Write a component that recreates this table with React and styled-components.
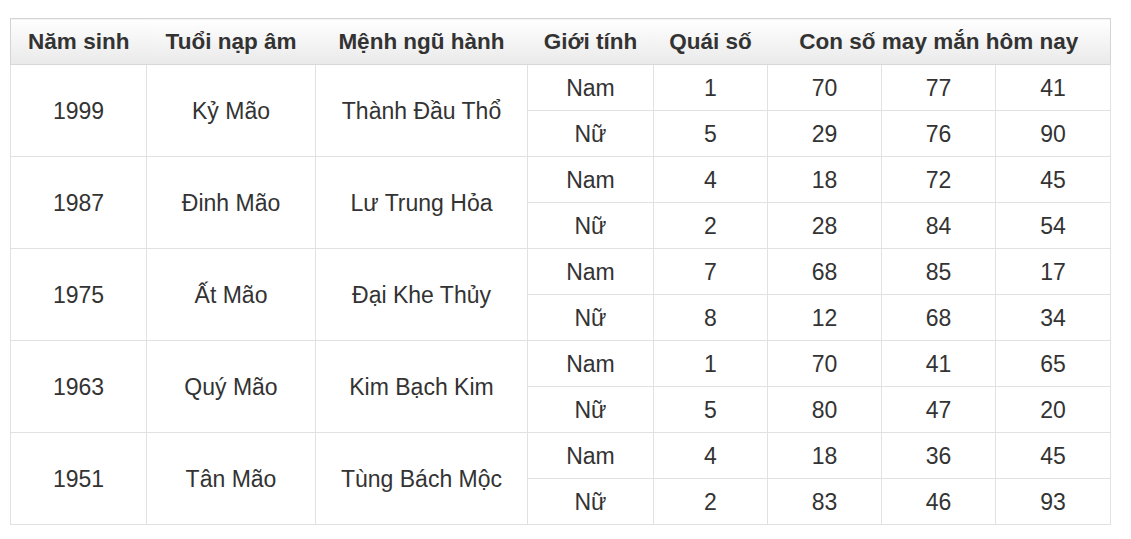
import React from "react";
import styled, { createGlobalStyle } from "styled-components";

const Global = createGlobalStyle`
  html, body { margin: 0; padding: 0; background: #fff; }
  body { font-family: "Liberation Sans", Arial, sans-serif; color: #333; }
`;

const Wrap = styled.div`
  padding: 18px 0 0 10px;
`;

const Table = styled.table`
  border-collapse: collapse;
  table-layout: fixed;
  width: 1100px;
  font-size: 23px;
  color: #333;
`;

const Th = styled.th`
  height: 45px;
  padding: 0;
  font-size: 22.5px;
  font-weight: bold;
  text-align: center;
  vertical-align: middle;
  white-space: nowrap;
  background: linear-gradient(to bottom, #ffffff 0%, #e9e9e9 100%);
  border-top: 1px solid #d4d4d4;
  border-bottom: 1px solid #d8d8d8;
  border-left: ${(p) => (p.$first ? "1px solid #d4d4d4" : "none")};
  border-right: ${(p) => (p.$last ? "1px solid #d4d4d4" : "none")};
`;

const Td = styled.td`
  height: 44px;
  padding: 1px 0 0;
  text-align: center;
  vertical-align: middle;
  white-space: nowrap;
  border: 1px solid #e1e1e1;
`;

const data = [
  ["1999", "Kỷ Mão", "Thành Đầu Thổ", [["Nam", 1, 70, 77, 41], ["Nữ", 5, 29, 76, 90]]],
  ["1987", "Đinh Mão", "Lư Trung Hỏa", [["Nam", 4, 18, 72, 45], ["Nữ", 2, 28, 84, 54]]],
  ["1975", "Ất Mão", "Đại Khe Thủy", [["Nam", 7, 68, 85, 17], ["Nữ", 8, 12, 68, 34]]],
  ["1963", "Quý Mão", "Kim Bạch Kim", [["Nam", 1, 70, 41, 65], ["Nữ", 5, 80, 47, 20]]],
  ["1951", "Tân Mão", "Tùng Bách Mộc", [["Nam", 4, 18, 36, 45], ["Nữ", 2, 83, 46, 93]]],
];

const widths = [136, 169, 212, 126, 114, 114, 114, 115];

export default function App() {
  return (
    <>
      <Global />
      <Wrap>
        <Table>
          <colgroup>
            {widths.map((w, i) => (
              <col key={i} style={{ width: w }} />
            ))}
          </colgroup>
          <thead>
            <tr>
              <Th $first>Năm sinh</Th>
              <Th>Tuổi nạp âm</Th>
              <Th>Mệnh ngũ hành</Th>
              <Th>Giới tính</Th>
              <Th>Quái số</Th>
              <Th colSpan={3} $last>Con số may mắn hôm nay</Th>
            </tr>
          </thead>
          <tbody>
            {data.map(([year, tuoi, menh, rows]) =>
              rows.map((r, j) => (
                <tr key={year + j}>
                  {j === 0 && (
                    <>
                      <Td rowSpan={2}>{year}</Td>
                      <Td rowSpan={2}>{tuoi}</Td>
                      <Td rowSpan={2}>{menh}</Td>
                    </>
                  )}
                  {r.map((v, k) => (
                    <Td key={k}>{v}</Td>
                  ))}
                </tr>
              ))
            )}
          </tbody>
        </Table>
      </Wrap>
    </>
  );
}
